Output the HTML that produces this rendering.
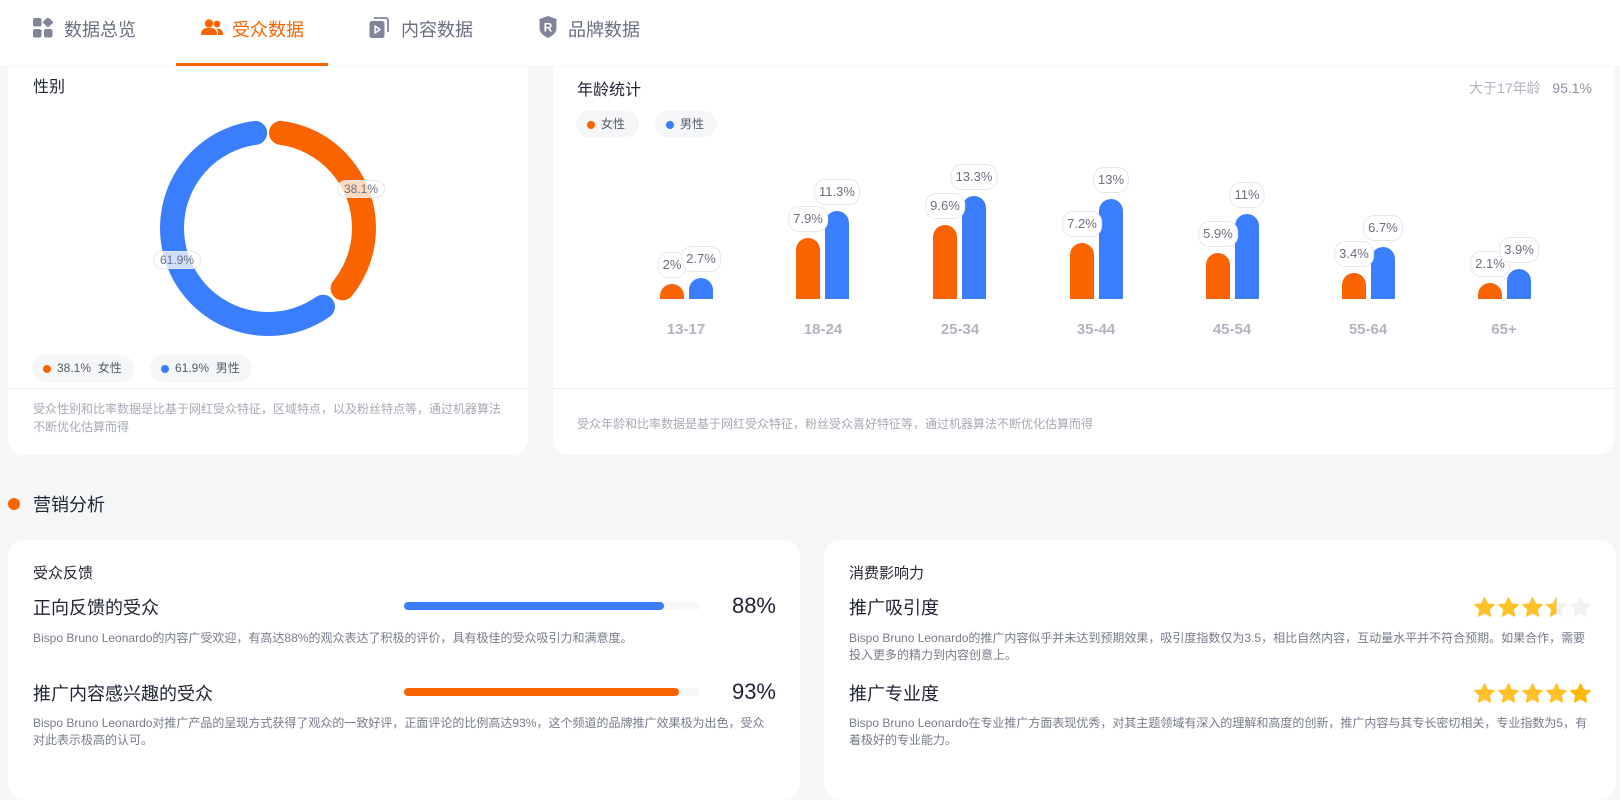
<!DOCTYPE html>
<html><head><meta charset="utf-8"><style>
*{margin:0;padding:0;box-sizing:border-box}
body{width:1620px;height:766px;overflow:hidden;background:#f5f6f8;font-family:"Liberation Sans","Noto Sans CJK SC",sans-serif;position:relative;color:#1f2333}
.a{position:absolute;white-space:nowrap}
.hdr{position:absolute;left:0;top:0;width:1620px;height:66px;background:#fff}
.tab{position:absolute;top:17px;font-size:18px;color:#6b7080;line-height:26px}
.card{position:absolute;background:#fff;border-radius:16px}
.pill{position:absolute;height:27px;border-radius:14px;background:#f5f6f8;font-size:12px;color:#555b6b;line-height:27px;padding-left:25px}
.pill i{position:absolute;left:11px;top:10px;width:8px;height:8px;border-radius:50%}
.bar{position:absolute;width:24px;border-radius:12px 12px 0 0}
.o{background:#fa6400}.b{background:#3a7efe}
.vl{position:absolute;height:26px;line-height:24px;border:1px solid #e6e8ee;border-radius:11px;background:#fff;font-size:13px;color:#6b7080;padding:0 4px;transform:translateX(-50%)}
.xl{position:absolute;top:321px;font-size:15px;font-weight:bold;color:#b0b4bf;transform:translateX(-50%)}
.foot{font-size:12px;color:#a6aab5;line-height:18px}
.desc{font-size:12px;color:#777c8a;line-height:17px}
.rt{font-size:18px;color:#1f2333}
.track{position:absolute;left:404px;width:296px;height:8px;border-radius:4px;background:#f6f7f9}
.track div{height:8px;border-radius:4px}
.pct{position:absolute;right:844px;font-size:22px;color:#1f2333}
</style></head><body>
<div class="hdr"></div>
<svg class="a" style="left:33px;top:18px" width="20" height="20" viewBox="0 0 20 20"><rect x="0" y="0" width="8.5" height="8.5" rx="2" fill="#80859a"/><path d="M15 0 L19.5 4.3 L15 8.6 L10.5 4.3Z" fill="#80859a" stroke="#80859a" stroke-linejoin="round" stroke-width="1.5"/><rect x="0" y="11" width="8.5" height="8.5" rx="2" fill="#80859a"/><rect x="11" y="11" width="8.5" height="8.5" rx="2" fill="#80859a"/></svg>
<div class="tab" style="left:64px">数据总览</div>
<svg class="a" style="left:201px;top:19px" width="22" height="17" viewBox="0 0 22 17"><circle cx="8" cy="4.5" r="4.2" fill="#fa6400"/><circle cx="16" cy="5" r="3.4" fill="#fa6400"/><path d="M0 16 C0 10 3 9 8 9 C13 9 16 10 16 16Z" fill="#fa6400"/><path d="M17 16 C17 12 16.5 10.5 15 9.6 C19 9.4 22 10.5 22 16Z" fill="#fa6400"/></svg>
<div class="tab" style="left:232px;color:#fa6400">受众数据</div>
<div class="a" style="left:176px;top:63px;width:152px;height:3px;background:#fa6400"></div>
<svg class="a" style="left:369px;top:17px" width="20" height="22" viewBox="0 0 20 22"><path d="M5 1 H17 a2 2 0 0 1 2 2 V15" fill="none" stroke="#80859a" stroke-width="1.8"/><rect x="0.5" y="4" width="15" height="17" rx="2.5" fill="#80859a"/><path d="M6 9 L11 12.5 L6 16Z" fill="none" stroke="#fff" stroke-width="1.5" stroke-linejoin="round"/></svg>
<div class="tab" style="left:401px">内容数据</div>
<svg class="a" style="left:539px;top:16px" width="18" height="22" viewBox="0 0 18 22"><path d="M9 0 L17.5 3 V12 C17.5 17 13 20 9 22 C5 20 0.5 17 0.5 12 V3Z" fill="#80859a"/><text x="9" y="15.5" font-size="12" font-weight="bold" fill="#fff" text-anchor="middle" font-family="Liberation Sans">R</text></svg>
<div class="tab" style="left:568px">品牌数据</div>

<div class="card" style="left:8px;top:67px;width:520px;height:388px;border-radius:0 0 16px 16px"></div>
<div class="a" style="left:33px;top:73px;font-size:16px">性别</div>
<svg class="a" style="left:0;top:0" width="540" height="440">
<circle cx="268" cy="228" r="96" fill="none" stroke="#fa6400" stroke-width="24" stroke-linecap="round" stroke-dasharray="203 500" stroke-dashoffset="-13" transform="rotate(-90 268 228)"/>
<circle cx="268" cy="228" r="96" fill="none" stroke="#3a7efe" stroke-width="24" stroke-linecap="round" stroke-dasharray="347 500" stroke-dashoffset="-243" transform="rotate(-90 268 228)"/>
</svg>
<div class="a" style="left:337px;top:180px;height:18px;line-height:16px;padding:0 6px;border:1px solid #e6e8ee;border-radius:9px;background:rgba(255,255,255,.75);font-size:12px;color:#6b7080">38.1%</div>
<div class="a" style="left:153px;top:251px;height:18px;line-height:16px;padding:0 6px;border:1px solid #e6e8ee;border-radius:9px;background:rgba(255,255,255,.75);font-size:12px;color:#6b7080">61.9%</div>
<div class="pill" style="left:32px;top:355px;width:102px"><i class="o"></i>38.1%&nbsp; 女性</div>
<div class="pill" style="left:150px;top:355px;width:102px"><i class="b"></i>61.9%&nbsp; 男性</div>
<div class="a" style="left:8px;top:388px;width:520px;height:1px;background:#eef0f3"></div>
<div class="a foot" style="left:33px;top:400px;white-space:normal;width:472px">受众性别和比率数据是比基于网红受众特征，区域特点，以及粉丝特点等，通过机器算法不断优化估算而得</div>

<div class="card" style="left:553px;top:67px;width:1061px;height:388px;border-radius:0 0 16px 16px"></div>
<div class="a" style="left:577px;top:76px;font-size:16px">年龄统计</div>
<div class="a" style="right:28px;top:78px;font-size:14px;color:#b0b4bf">大于17年龄 &nbsp;&nbsp;<span style="color:#8a8fa0">95.1%</span></div>
<div class="pill" style="left:576px;top:111px;width:63px;height:26px;line-height:26px"><i class="o"></i>女性</div>
<div class="pill" style="left:655px;top:111px;width:62px;height:26px;line-height:26px"><i class="b"></i>男性</div>

<div class="bar o" style="left:660px;top:284px;height:15px"></div><div class="bar b" style="left:689px;top:278px;height:21px"></div>
<div class="vl" style="left:672px;top:252px">2%</div><div class="vl" style="left:701px;top:246px">2.7%</div><div class="xl" style="left:686px">13-17</div>

<div class="bar o" style="left:796px;top:238px;height:61px"></div><div class="bar b" style="left:825px;top:211px;height:88px"></div>
<div class="vl" style="left:808px;top:206px">7.9%</div><div class="vl" style="left:837px;top:179px">11.3%</div><div class="xl" style="left:823px">18-24</div>

<div class="bar o" style="left:933px;top:225px;height:74px"></div><div class="bar b" style="left:962px;top:196px;height:103px"></div>
<div class="vl" style="left:945px;top:193px">9.6%</div><div class="vl" style="left:974px;top:164px">13.3%</div><div class="xl" style="left:960px">25-34</div>

<div class="bar o" style="left:1070px;top:243px;height:56px"></div><div class="bar b" style="left:1099px;top:199px;height:100px"></div>
<div class="vl" style="left:1082px;top:211px">7.2%</div><div class="vl" style="left:1111px;top:167px">13%</div><div class="xl" style="left:1096px">35-44</div>

<div class="bar o" style="left:1206px;top:253px;height:46px"></div><div class="bar b" style="left:1235px;top:214px;height:85px"></div>
<div class="vl" style="left:1218px;top:221px">5.9%</div><div class="vl" style="left:1247px;top:182px">11%</div><div class="xl" style="left:1232px">45-54</div>

<div class="bar o" style="left:1342px;top:273px;height:26px"></div><div class="bar b" style="left:1371px;top:247px;height:52px"></div>
<div class="vl" style="left:1354px;top:241px">3.4%</div><div class="vl" style="left:1383px;top:215px">6.7%</div><div class="xl" style="left:1368px">55-64</div>

<div class="bar o" style="left:1478px;top:283px;height:16px"></div><div class="bar b" style="left:1507px;top:269px;height:30px"></div>
<div class="vl" style="left:1490px;top:251px">2.1%</div><div class="vl" style="left:1519px;top:237px">3.9%</div><div class="xl" style="left:1504px">65+</div>

<div class="a" style="left:553px;top:388px;width:1061px;height:1px;background:#eef0f3"></div>
<div class="a foot" style="left:577px;top:415px">受众年龄和比率数据是基于网红受众特征，粉丝受众喜好特征等，通过机器算法不断优化估算而得</div>

<div class="a" style="left:8px;top:498px;width:12px;height:12px;border-radius:50%;background:#fa6400"></div>
<div class="a" style="left:33px;top:491px;font-size:18px;color:#1f2333">营销分析</div>

<div class="card" style="left:8px;top:540px;width:792px;height:260px"></div>
<div class="a" style="left:33px;top:562px;font-size:15px">受众反馈</div>
<div class="a rt" style="left:33px;top:594px">正向反馈的受众</div>
<div class="track" style="top:602px"><div class="b" style="width:260px"></div></div>
<div class="pct" style="top:593px">88%</div>
<div class="a desc" style="left:33px;top:630px">Bispo Bruno Leonardo的内容广受欢迎，有高达88%的观众表达了积极的评价，具有极佳的受众吸引力和满意度。</div>
<div class="a rt" style="left:33px;top:680px">推广内容感兴趣的受众</div>
<div class="track" style="top:688px"><div class="o" style="width:275px"></div></div>
<div class="pct" style="top:679px">93%</div>
<div class="a desc" style="left:33px;top:715px;white-space:normal;width:736px">Bispo Bruno Leonardo对推广产品的呈现方式获得了观众的一致好评，正面评论的比例高达93%，这个频道的品牌推广效果极为出色，受众对此表示极高的认可。</div>

<div class="card" style="left:824px;top:540px;width:792px;height:260px"></div>
<div class="a" style="left:849px;top:562px;font-size:15px">消费影响力</div>
<div class="a rt" style="left:849px;top:594px">推广吸引度</div>
<svg class="a" style="left:1474px;top:597px" width="120" height="22" viewBox="0 0 120 22">
<defs><path id="s" d="M10.5 1 L13.3 7.1 L20 7.8 L15 12.3 L16.4 19 L10.5 15.6 L4.6 19 L6 12.3 L1 7.8 L7.7 7.1Z"/>
<clipPath id="h"><rect x="0" y="0" width="10.5" height="22"/></clipPath></defs>
<use href="#s" fill="#ffc12b" stroke="#ffc12b" stroke-width="1.5" stroke-linejoin="round"/>
<use href="#s" x="24" fill="#ffc12b" stroke="#ffc12b" stroke-width="1.5" stroke-linejoin="round"/>
<use href="#s" x="48" fill="#ffc12b" stroke="#ffc12b" stroke-width="1.5" stroke-linejoin="round"/>
<use href="#s" x="72" fill="#f0f1f4" stroke="#f0f1f4" stroke-width="1.5" stroke-linejoin="round"/>
<g transform="translate(72 0)"><use href="#s" clip-path="url(#h)" fill="#ffc12b" stroke="#ffc12b" stroke-width="1.5" stroke-linejoin="round"/></g>
<use href="#s" x="96" fill="#f0f1f4" stroke="#f0f1f4" stroke-width="1.5" stroke-linejoin="round"/>
</svg>
<div class="a desc" style="left:849px;top:630px;white-space:normal;width:745px">Bispo Bruno Leonardo的推广内容似乎并未达到预期效果，吸引度指数仅为3.5，相比自然内容，互动量水平并不符合预期。如果合作，需要投入更多的精力到内容创意上。</div>
<div class="a rt" style="left:849px;top:680px">推广专业度</div>
<svg class="a" style="left:1474px;top:683px" width="120" height="22" viewBox="0 0 120 22">
<use href="#s" fill="#ffc12b" stroke="#ffc12b" stroke-width="1.5" stroke-linejoin="round"/>
<use href="#s" x="24" fill="#ffc12b" stroke="#ffc12b" stroke-width="1.5" stroke-linejoin="round"/>
<use href="#s" x="48" fill="#ffc12b" stroke="#ffc12b" stroke-width="1.5" stroke-linejoin="round"/>
<use href="#s" x="72" fill="#ffc12b" stroke="#ffc12b" stroke-width="1.5" stroke-linejoin="round"/>
<use href="#s" x="96" fill="#ffb800" stroke="#ffb800" stroke-width="1.5" stroke-linejoin="round"/>
</svg>
<div class="a desc" style="left:849px;top:715px;white-space:normal;width:745px">Bispo Bruno Leonardo在专业推广方面表现优秀，对其主题领域有深入的理解和高度的创新，推广内容与其专长密切相关，专业指数为5，有着极好的专业能力。</div>
</body></html>
